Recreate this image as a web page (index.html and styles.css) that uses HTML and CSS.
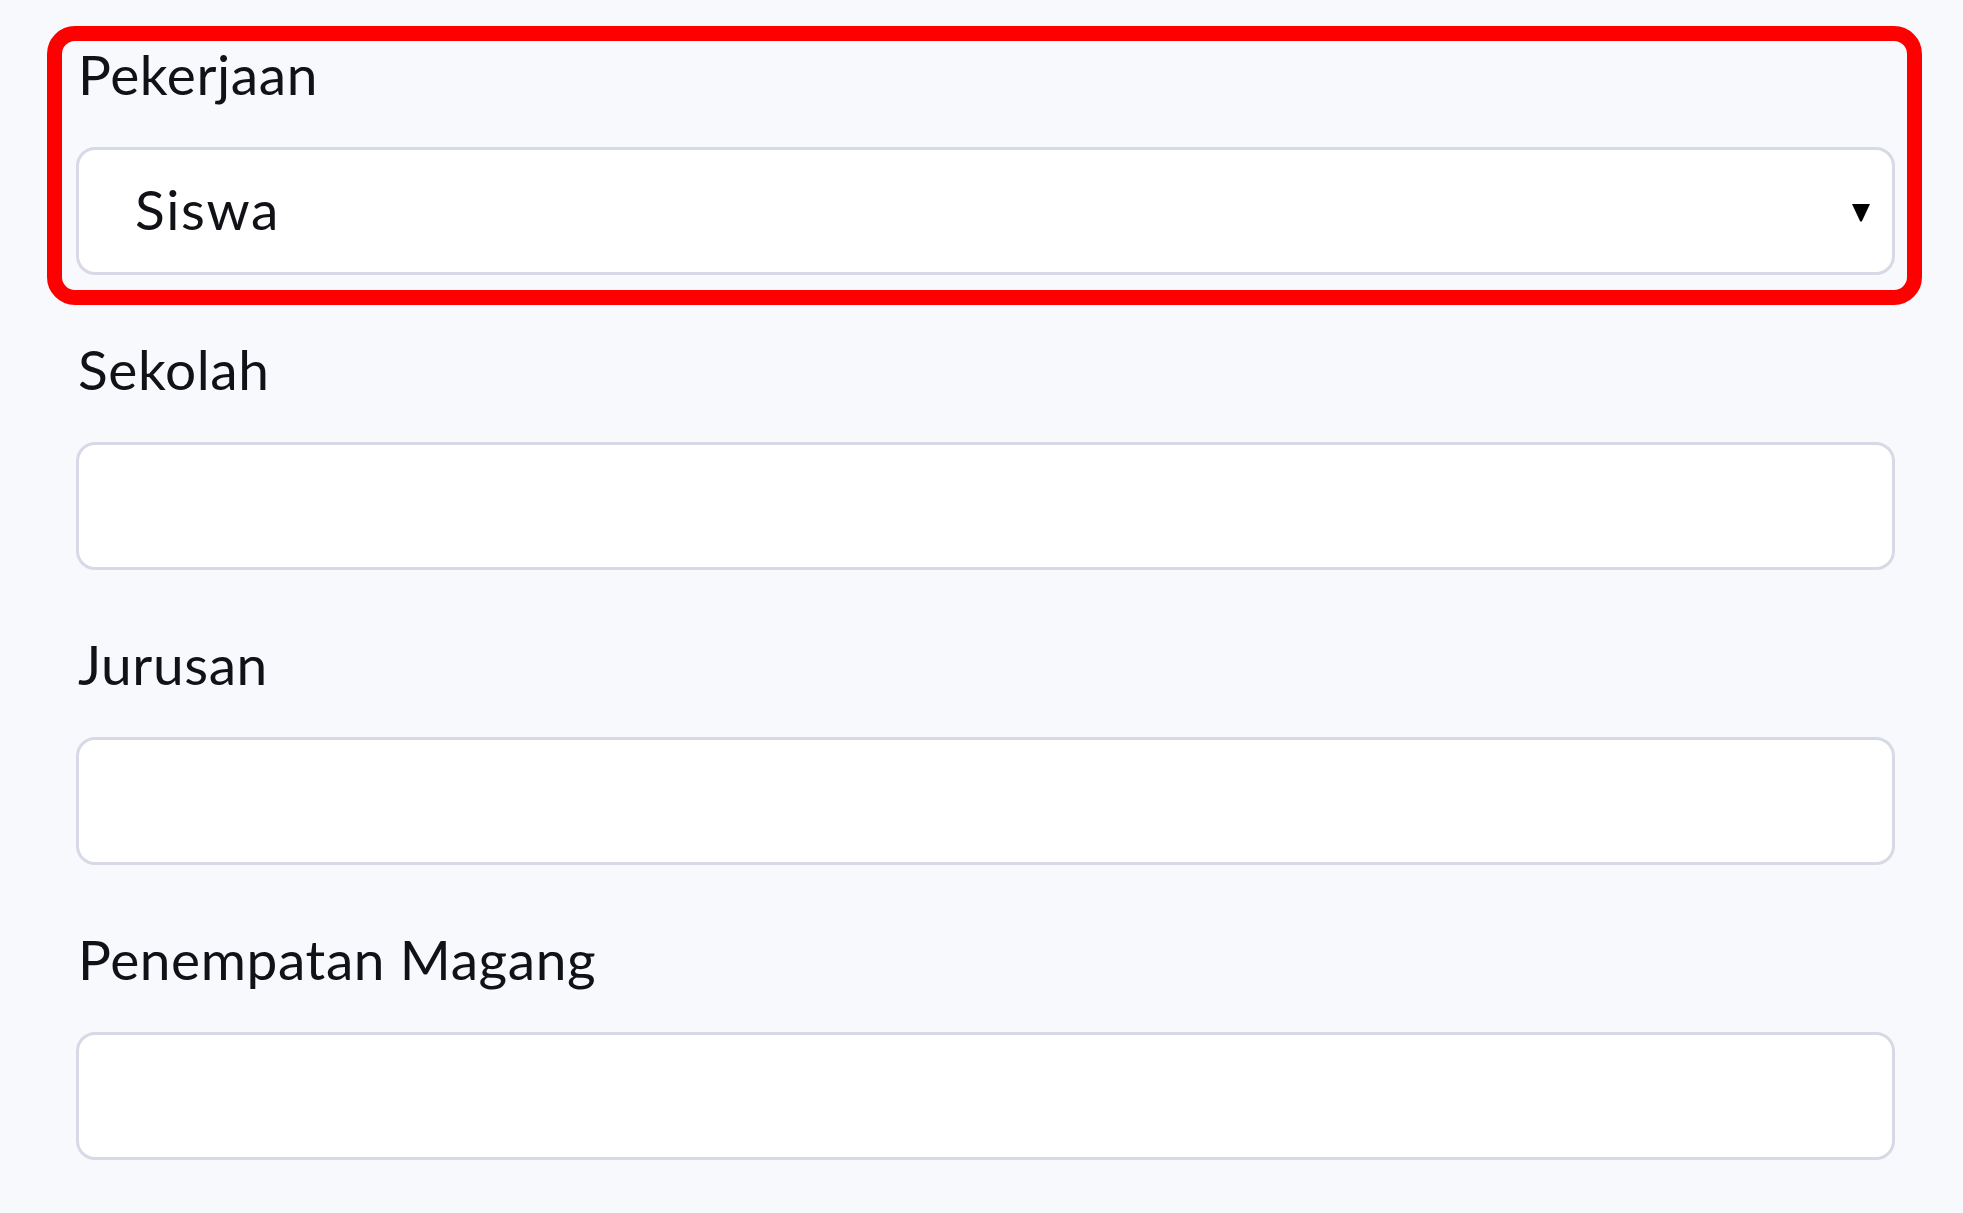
FILE: index.html
```html
<!DOCTYPE html>
<html lang="id">
<head>
<meta charset="utf-8">
<title>Form Magang</title>
<link rel="stylesheet" href="styles.css">
</head>
<body>
<main class="form">
  <div class="form-group is-highlighted">
    <label class="form-label" for="pekerjaan">Pekerjaan</label>
    <div class="select-wrap">
      <select class="form-control form-select" id="pekerjaan">
        <option>Siswa</option>
        <option>Mahasiswa</option>
      </select>
      <svg class="select-arrow" width="18" height="18" viewBox="0 0 18 18" aria-hidden="true"><path d="M0 0 H18 L10 17 Q9 18.5 8 17 Z" fill="#000"/></svg>
    </div>
  </div>
  <div class="form-group">
    <label class="form-label" for="sekolah">Sekolah</label>
    <input class="form-control" id="sekolah" type="text">
  </div>
  <div class="form-group">
    <label class="form-label" for="jurusan">Jurusan</label>
    <input class="form-control" id="jurusan" type="text">
  </div>
  <div class="form-group">
    <label class="form-label" for="penempatan">Penempatan Magang</label>
    <input class="form-control" id="penempatan" type="text">
  </div>
</main>
</body>
</html>
```
FILE: styles.css
```css
html, body {
  margin: 0;
  padding: 0;
  background: #f8f9fc;
}
body {
  font-family: Lato, "Noto Sans", sans-serif;
  color: #111217;
}
.form {
  margin-left: 76px;
  width: 1819px;
  padding-top: 38px;
}
.form-group {
  margin-bottom: 58px;
}
.form-group.is-highlighted {
  position: relative;
}
.form-group.is-highlighted::after {
  content: "";
  position: absolute;
  top: -12px;
  left: -29px;
  right: -27px;
  bottom: -30px;
  border: 15px solid #ff0000;
  border-radius: 28px;
  pointer-events: none;
}
.form-label {
  display: block;
  box-sizing: border-box;
  font-size: 55px;
  letter-spacing: 0.6px;
  line-height: 72px;
  height: 82px;
  margin-bottom: 27px;
  padding-left: 2px;
}
.form-control {
  display: block;
  box-sizing: border-box;
  width: 100%;
  height: 128px;
  margin: 0;
  border: 3px solid #d8d9e6;
  border-radius: 19px;
  background: #fff;
  font-family: inherit;
  font-size: 55px;
  color: #111217;
  padding: 0 56px;
  outline: none;
}
.select-wrap {
  position: relative;
}
.form-select {
  appearance: none;
  -webkit-appearance: none;
  letter-spacing: 1.6px;
  padding-bottom: 4px;
}
.select-arrow {
  position: absolute;
  right: 25px;
  top: 57px;
  pointer-events: none;
}
```
